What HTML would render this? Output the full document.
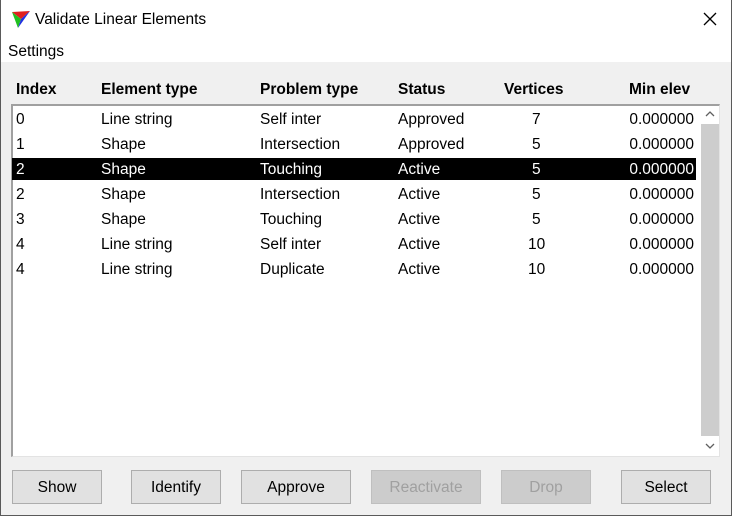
<!DOCTYPE html>
<html><head><style>
*{margin:0;padding:0;box-sizing:border-box}
body{width:732px;height:516px;position:relative;background:#f0f0f0;font-family:"Liberation Sans",sans-serif;font-size:15.5px;color:#000;overflow:hidden}
.abs{position:absolute;white-space:nowrap}
#frame{position:absolute;left:0;top:0;width:732px;height:516px;border:1px solid #5a5a5a;border-top:none;pointer-events:none}
#title{position:absolute;left:0;top:0;width:732px;height:37px;background:#fff}
#menu{position:absolute;left:0;top:37px;width:732px;height:25px;background:#fff}
.hd{font-weight:bold;top:81px}
#list{position:absolute;left:11px;top:104px;width:709px;height:353px;background:#fff;border-top:2px solid #a0a0a0;border-left:2px solid #a0a0a0;border-right:1px solid #e3e3e3;border-bottom:1px solid #e3e3e3}
.row{position:absolute;left:12px;width:684px;height:22px}
.row span{position:absolute;top:3px;white-space:nowrap}
.sel{background:#000;color:#fff}
.btn{position:absolute;top:470px;height:34px;background:#e1e1e1;border:1px solid #adadad;text-align:center;line-height:33px}
.dis{background:#cccccc;border-color:#bfbfbf;color:#a0a0a0}
</style></head><body>
<div id="title"></div>
<svg class="abs" style="left:11px;top:10px" width="20" height="19" viewBox="0 0 20 19"><polygon points="1,2 19,1 10,9" fill="#e02020"/><polygon points="1,2 10,9 7,18" fill="#20c020"/><polygon points="19,1 10,9 7,18" fill="#2030e0"/></svg>
<div class="abs" style="left:35px;top:11px;font-size:15.5px">Validate Linear Elements</div>
<svg class="abs" style="left:703px;top:12px" width="14" height="14"><path d="M1 1L13 13M13 1L1 13" stroke="#000" stroke-width="1.3"/></svg>
<div id="menu"></div>
<div class="abs" style="left:8px;top:43px">Settings</div>
<div class="abs hd" style="left:16px">Index</div>
<div class="abs hd" style="left:101px">Element type</div>
<div class="abs hd" style="left:260px">Problem type</div>
<div class="abs hd" style="left:398px">Status</div>
<div class="abs hd" style="left:504px">Vertices</div>
<div class="abs hd" style="left:629px">Min elev</div>
<div id="list"></div>
<div class="abs" style="left:701px;top:124px;width:18px;height:312px;background:#cdcdcd"></div>
<svg class="abs" style="left:705px;top:110px" width="10" height="8"><path d="M1 6L5 2L9 6" stroke="#606060" fill="none" stroke-width="1.3"/></svg>
<svg class="abs" style="left:705px;top:442px" width="10" height="8"><path d="M1 2L5 6L9 2" stroke="#606060" fill="none" stroke-width="1.3"/></svg>
<div class="row" style="top:108px"><span style="left:4px">0</span><span style="left:89px">Line string</span><span style="left:248px">Self inter</span><span style="left:386px">Approved</span><span style="left:520px">7</span><span style="right:2px">0.000000</span></div>
<div class="row" style="top:133px"><span style="left:4px">1</span><span style="left:89px">Shape</span><span style="left:248px">Intersection</span><span style="left:386px">Approved</span><span style="left:520px">5</span><span style="right:2px">0.000000</span></div>
<div class="row sel" style="top:158px"><span style="left:4px">2</span><span style="left:89px">Shape</span><span style="left:248px">Touching</span><span style="left:386px">Active</span><span style="left:520px">5</span><span style="right:2px">0.000000</span></div>
<div class="row" style="top:183px"><span style="left:4px">2</span><span style="left:89px">Shape</span><span style="left:248px">Intersection</span><span style="left:386px">Active</span><span style="left:520px">5</span><span style="right:2px">0.000000</span></div>
<div class="row" style="top:208px"><span style="left:4px">3</span><span style="left:89px">Shape</span><span style="left:248px">Touching</span><span style="left:386px">Active</span><span style="left:520px">5</span><span style="right:2px">0.000000</span></div>
<div class="row" style="top:233px"><span style="left:4px">4</span><span style="left:89px">Line string</span><span style="left:248px">Self inter</span><span style="left:386px">Active</span><span style="left:516px">10</span><span style="right:2px">0.000000</span></div>
<div class="row" style="top:258px"><span style="left:4px">4</span><span style="left:89px">Line string</span><span style="left:248px">Duplicate</span><span style="left:386px">Active</span><span style="left:516px">10</span><span style="right:2px">0.000000</span></div>
<div class="btn" style="left:12px;width:90px">Show</div>
<div class="btn" style="left:131px;width:90px">Identify</div>
<div class="btn" style="left:241px;width:110px">Approve</div>
<div class="btn dis" style="left:371px;width:110px">Reactivate</div>
<div class="btn dis" style="left:501px;width:90px">Drop</div>
<div class="btn" style="left:621px;width:90px">Select</div>
<div id="frame"></div>
</body></html>
